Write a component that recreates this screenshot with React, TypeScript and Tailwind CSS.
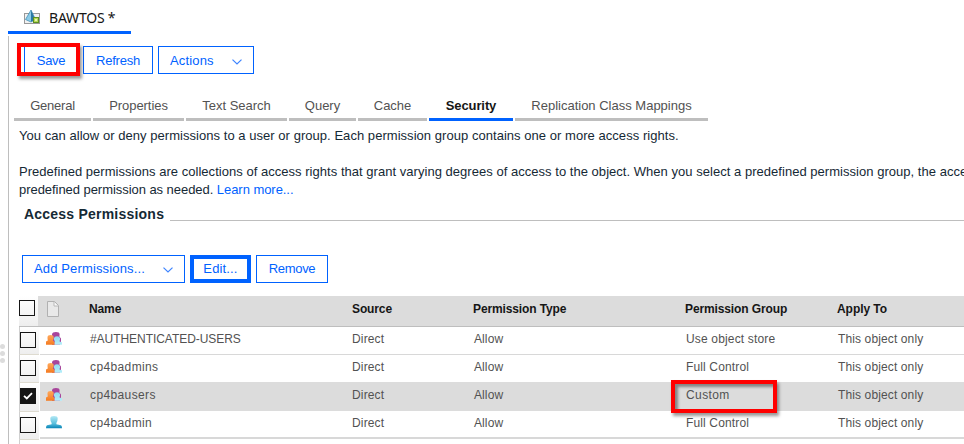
import type { ReactNode } from "react";

type Kind = "group" | "user";

const rows: { name: string; nameCls: string; group: string; groupCls: string; kind: Kind; checked?: boolean; box: string; line: string }[] = [
  { name: "#AUTHENTICATED-USERS", nameCls: "tracking-[-0.05px]", group: "Use object store", groupCls: "tracking-[0.16px]", kind: "group", box: "h-[28px] pt-[5px]", line: "h-[28px] pt-[3px] border-b border-[#d8d8d8]" },
  { name: "cp4badmins", nameCls: "tracking-[0.38px]", group: "Full Control", groupCls: "tracking-[0.14px]", kind: "group", box: "h-[28px] pt-[5px]", line: "h-[27px] pt-[3px]" },
  { name: "cp4bausers", nameCls: "tracking-[0.38px]", group: "Custom", groupCls: "tracking-[0.4px]", kind: "group", checked: true, box: "h-[29px] pt-[5px]", line: "h-[29px] pt-[4px] bg-[#dcdcdc]" },
  { name: "cp4badmin", nameCls: "tracking-[0.38px]", group: "Full Control", groupCls: "tracking-[0.14px]", kind: "user", box: "h-[28px] pt-[5px]", line: "h-[28px] pt-[3px] border-b-2 border-[#d8d8d8]" },
];

const tabs = [
  { label: "General", cls: "w-[77px] tracking-[-0.22px]" },
  { label: "Properties", cls: "w-[91px] tracking-[-0.05px]" },
  { label: "Text Search", cls: "w-[101px] tracking-[0px]" },
  { label: "Query", cls: "w-[67px] tracking-[0px]" },
  { label: "Cache", cls: "w-[69px] tracking-[-0.05px]" },
  { label: "Security", cls: "w-[84px] tracking-[-0.1px]", active: true },
  { label: "Replication Class Mappings", cls: "w-[193px] tracking-[0px]" },
];

function Chevron() {
  return (
    <svg className="relative top-px" width="10" height="6" viewBox="0 0 10 6" fill="none" stroke="#3d84ff" strokeWidth="1.2">
      <path d="M0.5 0.6 5 5 9.5 0.6" />
    </svg>
  );
}

function Button({ className, children }: { className: string; children: ReactNode }) {
  return (
    <button className={`flex h-[28px] shrink-0 items-center border-[#0062ff] whitespace-nowrap text-[#0062ff] ${className}`}>
      {children}
    </button>
  );
}

function ObjectStoreIcon() {
  return (
    <svg width="16" height="15" viewBox="0 0 16 15">
      <rect x="0.5" y="3.5" width="15" height="10" fill="#f1f1f1" stroke="#999" />
      <path d="M7 0 1.5 9.5 7 12Z" fill="#8ccbe8" />
      <path d="M7 0 11.5 9.5 7 12Z" fill="#2b79a3" />
      <path d="M7 0 1.5 9.5 7 12 11.5 9.5Z" fill="none" stroke="#3486b0" strokeWidth="0.7" />
      <rect x="9.5" y="7.5" width="5" height="5" fill="#b6d957" stroke="#5e9022" />
      <rect x="11" y="9" width="2" height="2" fill="#e6f5b2" />
    </svg>
  );
}

function PageIcon() {
  return (
    <svg width="12" height="16" viewBox="0 0 12 16">
      <path d="M0.5 0.5H7.5L11.5 4.5V15.5H0.5Z" fill="#e9e9e9" stroke="#b1b1b1" />
      <path d="M7 1V5H11" fill="#fafafa" stroke="#b8b8b8" />
    </svg>
  );
}

function GroupIcon() {
  return (
    <svg width="16" height="13" viewBox="0 0 16 13">
      <defs>
        <linearGradient id="orange" x1="0" x2="0" y1="0" y2="1">
          <stop offset="0" stopColor="#ffa95c" />
          <stop offset="1" stopColor="#f47a20" />
        </linearGradient>
        <linearGradient id="cyan" x1="0" x2="0" y1="0" y2="1">
          <stop offset="0" stopColor="#8fdcf0" />
          <stop offset="1" stopColor="#b5eefa" />
        </linearGradient>
      </defs>
      <path d="M6 2.4Q6.4 0 10 0T13.6 2.4L13.4 4.6 15 6.6V10H14V12.8H6Z" fill="#a8459b" />
      <path d="M1.5 5.2Q1.6 3 4.6 3T7.7 5.2Q7.7 7.4 6.8 8.6L8.6 10V12.8H0V9.6L1.8 8.4Q1.5 7 1.5 5.2Z" fill="url(#orange)" />
      <path d="M7.9 6.6Q8.2 4.2 11 4.2T14.1 6.6Q14.1 8.4 13.4 9.2L16 10.4V12.8H8.6V11L8.8 9.2Q7.9 8.2 7.9 6.6Z" fill="url(#cyan)" />
    </svg>
  );
}

function UserIcon() {
  return (
    <svg width="16" height="13" viewBox="0 0 16 13">
      <defs>
        <linearGradient id="blue" x1="0" x2="0" y1="0" y2="1">
          <stop offset="0" stopColor="#b4e8f4" />
          <stop offset="0.6" stopColor="#5cc1de" />
          <stop offset="1" stopColor="#0783b6" />
        </linearGradient>
      </defs>
      <path d="M4.3 2.4Q4.4 0 8 0T11.7 2.4Q11.7 5 10.4 7V8.2L15 9.2Q16 9.8 16 12.3H0Q0 9.8 1 9.2L5.6 8.2V7Q4.3 5 4.3 2.4Z" fill="url(#blue)" />
    </svg>
  );
}

function Checkbox({ checked }: { checked?: boolean }) {
  return (
    <div className={`flex size-4 items-center justify-center border border-[#161616] ${checked ? "bg-[#161616]" : ""}`}>
      {checked && (
        <svg width="10" height="8" viewBox="0 0 10 8" fill="none" stroke="white" strokeWidth="1.8">
          <path d="M1 3.8 3.8 6.5 9 1.2" />
        </svg>
      )}
    </div>
  );
}

export default function App() {
  return (
    <div className="relative h-[444px] w-[964px] overflow-hidden bg-white font-['Liberation_Sans',Arial,sans-serif] text-[13px] leading-[18px] text-[#152935]">
      <header className="ml-2 flex h-[34px] w-[123px] items-center border-b-[3px] border-[#0062ff] pt-[3px] pl-4">
        <ObjectStoreIcon />
        <span className="mt-px ml-[9px] font-['Noto_Sans','Open_Sans',sans-serif] text-[14px] tracking-[-0.2px] whitespace-nowrap text-[#161616]">BAWTOS *</span>
      </header>

      <main className="mt-[2px] ml-2 flex h-[408px] flex-col border-l border-[#bebebe]">
        <div className="ml-[15px] flex gap-[5px] pt-[10px]">
          <Button className="w-[54px] justify-center border pt-px tracking-[-0.3px]">Save</Button>
          <Button className="w-[70px] justify-center border pt-px tracking-[-0.2px]">Refresh</Button>
          <Button className="w-[96px] justify-between border pt-px pr-[11px] pl-[11px] tracking-[0.15px]">
            Actions <Chevron />
          </Button>
        </div>

        <nav className="mt-[18px] ml-[5px] flex gap-[2px] text-[#525252]">
          {tabs.map((t) => (
            <div
              key={t.label}
              className={`flex h-[29px] shrink-0 justify-center border-b-[3px] pt-[5px] whitespace-nowrap ${t.cls} ${t.active ? "border-[#0062ff] font-bold text-[#161616]" : "border-[#bebebe]"}`}
            >
              {t.label}
            </div>
          ))}
        </nav>

        <div className="mt-[6px] ml-[10px] whitespace-nowrap">
          <p className="tracking-[0.042px]">You can allow or deny permissions to a user or group. Each permission group contains one or more access rights.</p>
          <p className="mt-[18px] tracking-[0.032px]">Predefined permissions are collections of access rights that grant varying degrees of access to the object. When you select a predefined permission group, the acce</p>
          <p className="tracking-[-0.05px]">predefined permission as needed. <a className="text-[#0062ff]">Learn more...</a></p>
        </div>

        <div className="mt-[6px] ml-[15px] flex h-[18px] shrink-0">
          <h2 className="w-[146px] text-[14px] font-bold tracking-[0.22px] whitespace-nowrap">Access Permissions</h2>
          <div className="mt-[15px] h-px flex-1 bg-[#bebebe]" />
        </div>

        <div className="mt-[32px] ml-[13px] flex gap-[5px]">
          <Button className="w-[163px] justify-between border pr-[11px] pl-[11px] tracking-[0.14px]">
            Add Permissions... <Chevron />
          </Button>
          <Button className="w-[61px] justify-center border-4 tracking-[0.15px]">Edit...</Button>
          <Button className="w-[72px] justify-center border tracking-[-0.3px]">Remove</Button>
        </div>

        <div className="mt-[13px] ml-[10px] flex h-[148px] text-[#525252]">
          <div className="flex w-5 shrink-0 flex-col">
            <div className="h-[31px] border-b border-[#bebebe] bg-linear-to-b from-white to-[#eeeeee] pt-1">
              <Checkbox />
            </div>
            {rows.map((r) => (
              <div key={r.name} className={`shrink-0 border-b border-l border-b-[#dedbd0] border-l-[#cfcfcf] bg-linear-to-b from-white to-[#eeeeee] ${r.box}`}>
                <Checkbox checked={r.checked} />
              </div>
            ))}
            <div className="flex-1 border-l border-[#cfcfcf]" />
          </div>
          <div className="-ml-px flex flex-1 flex-col text-[12px]">
            <div className="grid h-[31px] shrink-0 grid-cols-[51px_263px_121px_212px_152px_1fr] items-start border-b border-[#bebebe] bg-[#dcdcdc] pt-1 font-bold tracking-[-0.12px] text-[#161616]">
              <div className="pt-px pl-[9px]"><PageIcon /></div>
              <span>Name</span><span>Source</span><span>Permission Type</span><span>Permission Group</span><span className="tracking-[-0.05px]">Apply To</span>
            </div>
            {rows.map((r) => (
              <div key={r.name} className={`ml-[2px] grid shrink-0 grid-cols-[50px_262px_122px_212px_152px_1fr] items-start ${r.line}`}>
                <div className="pt-[2px] pl-[6px]">{r.kind === "group" ? <GroupIcon /> : <UserIcon />}</div>
                <span className={r.nameCls}>{r.name}</span>
                <span className="tracking-[0.15px]">Direct</span>
                <span className="tracking-[0.1px]">Allow</span>
                <span className={r.groupCls}>{r.group}</span>
                <span className="tracking-[0.12px]">This object only</span>
              </div>
            ))}
          </div>
        </div>
      </main>

      <div className="absolute top-[344px] left-0 flex flex-col gap-[2px]">
        <i className="size-[5px] rounded-full bg-[#dcdcdc]" />
        <i className="size-[5px] rounded-full bg-[#dcdcdc]" />
        <i className="size-[5px] rounded-full bg-[#dcdcdc]" />
      </div>
      <div className="absolute top-[43px] left-[17px] h-[33px] w-[63px] border-4 border-[#ff0000] shadow-[2px_3px_3px_rgba(0,0,0,0.4)]" />
      <div className="absolute top-[380px] left-[671px] h-[33px] w-[106px] border-4 border-[#ff0000] shadow-[2px_3px_3px_rgba(0,0,0,0.4),inset_3px_3px_3px_rgba(0,0,0,0.4)]" />
    </div>
  );
}
